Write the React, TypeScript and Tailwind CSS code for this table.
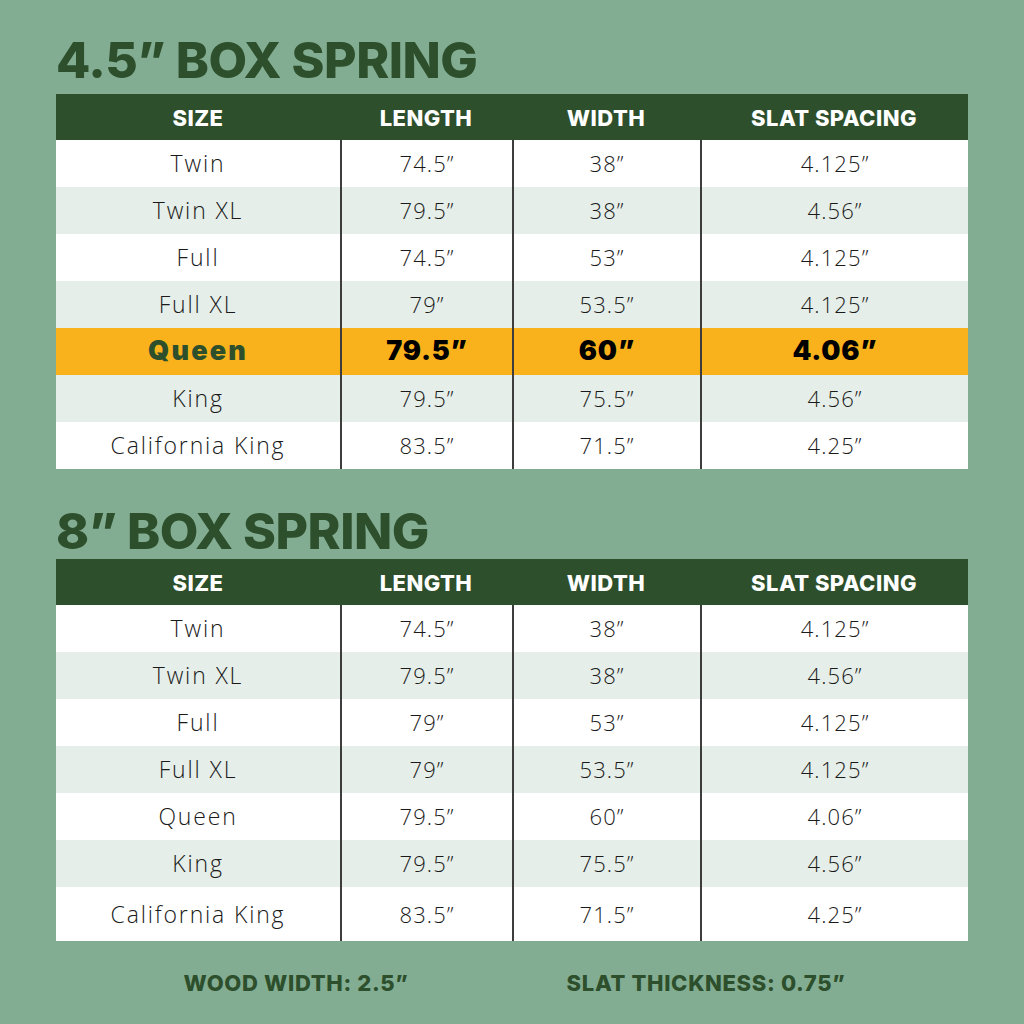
const heads = ["SIZE", "LENGTH", "WIDTH", "SLAT SPACING"];

type Row = { cells: string[]; hot?: boolean };

const small: Row[] = [
  { cells: ["Twin", "74.5”", "38”", "4.125”"] },
  { cells: ["Twin XL", "79.5”", "38”", "4.56”"] },
  { cells: ["Full", "74.5”", "53”", "4.125”"] },
  { cells: ["Full XL", "79”", "53.5”", "4.125”"] },
  { cells: ["Queen", "79.5”", "60”", "4.06”"], hot: true },
  { cells: ["King", "79.5”", "75.5”", "4.56”"] },
  { cells: ["California King", "83.5”", "71.5”", "4.25”"] },
];

const big: Row[] = [
  { cells: ["Twin", "74.5”", "38”", "4.125”"] },
  { cells: ["Twin XL", "79.5”", "38”", "4.56”"] },
  { cells: ["Full", "79”", "53”", "4.125”"] },
  { cells: ["Full XL", "79”", "53.5”", "4.125”"] },
  { cells: ["Queen", "79.5”", "60”", "4.06”"] },
  { cells: ["King", "79.5”", "75.5”", "4.56”"] },
  { cells: ["California King", "83.5”", "71.5”", "4.25”"] },
];

const cols = ["w-[284px]", "w-[172px]", "w-[188px]", "w-[268px]"];

function SizeTable({ rows, lastTall }: { rows: Row[]; lastTall?: boolean }) {
  return (
    <div className="w-[912px]">
      <div className="flex h-[46px] bg-[#2d4f2c] text-white font-['Inter',sans-serif] font-extrabold text-[22px] tracking-[0.02em]">
        {heads.map((h, i) => (
          <div key={h} className={`${cols[i]} flex items-center justify-center pt-[2px]`}>
            {h}
          </div>
        ))}
      </div>
      {rows.map((r, ri) => {
        const bg = r.hot ? "bg-[#fab21c]" : ri % 2 === 0 ? "bg-white" : "bg-[#e5eee8]";
        const h = lastTall && ri === rows.length - 1 ? "h-[54px]" : "h-[47px]";
        return (
          <div key={ri} className={`flex ${h} ${bg}`}>
            {r.cells.map((c, ci) => (
              <div
                key={ci}
                className={`${cols[ci]} flex items-center justify-center ${ci > 0 ? "border-l-2 border-[#3d3d3d]" : ""} ${
                  r.hot
                    ? `font-['Inter',sans-serif] font-black text-[27px] ${ci === 0 ? "text-[#2d4f2c] tracking-[0.08em]" : "text-black tracking-[0.03em]"}`
                    : `font-['Open_Sans',sans-serif] font-light text-[#1a1a1a] ${ci === 0 ? "text-[23px] tracking-[0.08em]" : "text-[22px] tracking-[0.05em]"}`
                }`}
              >
                {c}
              </div>
            ))}
          </div>
        );
      })}
    </div>
  );
}

export default function App() {
  return (
    <div className="w-[1024px] h-[1024px] bg-[#82ad92] pl-[56px] pt-[30px] flex flex-col">
      <h1 className="font-['Inter',sans-serif] font-extrabold text-[50px] leading-[60px] text-[#2d4f2c] tracking-[-0.01em] h-[64px]">
        4.5” BOX SPRING
      </h1>
      <SizeTable rows={small} />
      <h2 className="mt-[32px] font-['Inter',sans-serif] font-extrabold text-[50px] leading-[60px] text-[#2d4f2c] tracking-[-0.01em] h-[58px]">
        8” BOX SPRING
      </h2>
      <SizeTable rows={big} lastTall />
      <div className="flex w-[912px] mt-[26px] font-['Inter',sans-serif] font-extrabold text-[22px] text-[#2d4f2c] tracking-[0.03em]">
        <div className="w-[480px] text-center">WOOD WIDTH: 2.5”</div>
        <div className="w-[340px] text-center">SLAT THICKNESS: 0.75”</div>
      </div>
    </div>
  );
}
